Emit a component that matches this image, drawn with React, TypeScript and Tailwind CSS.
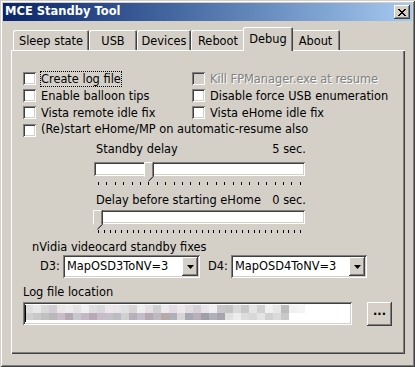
import React from 'react';

// classic win2k bevels
const raised =
  'shadow-[inset_-1px_-1px_0_#404040,inset_1px_1px_0_#ffffff,inset_-2px_-2px_0_#808080,inset_2px_2px_0_#d4d0c8]';
const sunken =
  'shadow-[inset_1px_1px_0_#808080,inset_-1px_-1px_0_#ffffff,inset_2px_2px_0_#404040,inset_-2px_-2px_0_#d4d0c8]';

const tabs = [
  { name: 'Sleep state', w: 'w-[76px]' },
  { name: 'USB', w: 'w-[48px]' },
  { name: 'Devices', w: 'w-[54px]' },
  { name: 'Reboot', w: 'w-[54px]' },
  { name: 'Debug', w: 'w-[50px]', active: true },
  { name: 'About', w: 'w-[49px]' },
];

// pixelated (blurred) path in the log file box
const blurTop = [
  '#e0dfe0', '#e8e8e8', '#d8d8d8', '#d4ccd4', '#e8e6e8', '#ececec', '#e4e2e4', '#f0f0f0', '#e0dde0', '#d8d8dc',
  '#ece6ea', '#e8e4e8', '#e0e0e0', '#d8d4d8', '#eeeeee', '#e6e0e6', '#d0d0d0', '#ece8ec', '#e4dce4', '#ece8ec',
  '#e0dce0', '#d8d0d8', '#e8e4e8', '#f0eef0', '#c8c8c8', '#c4c4c4', '#d8d8d8', '#c8c8c8', '#e4e4e4', '#d0d0d0',
  '#f0f0f0', '#e6e6e6', '#bcbcbc', '#f0f0f0', '#f4f4f4',
];
const blurBottom = [
  '#d0d0d0', '#c8c8c8', '#c0c0c0', '#b8b8b8', '#c8bcc8', '#b4a8b4', '#c8c8cc', '#c4b8c4', '#b8a8b8', '#c8bcc8',
  '#c4c0c8', '#bcbcc4', '#d0d0d0', '#b8b0b8', '#c4bcc8', '#b4a8b4', '#c0b8c0', '#b8a8a8', '#b0b0b8', '#d8d4d8',
  '#a8a8b0', '#b8b0b8', '#a0a0a8', '#b0b0b8', '#a8a4ac', '#e0e0e0', '#ececec', '#dcdcdc', '#d8d8d8', '#e4e4e4',
  '#d0d0d0', '#dadada', '#c8c8c8', '#ffffff', '#ffffff',
];

function Checkbox({ disabled }: { disabled?: boolean }) {
  return <span className={`block w-[13px] h-[13px] shrink-0 ${disabled ? 'bg-[#d4d0c8]' : 'bg-white'} ${sunken}`} />;
}

function Check({ label, focus, disabled }: { label: string; focus?: boolean; disabled?: boolean }) {
  return (
    <div className="flex items-center h-[17px]">
      <Checkbox disabled={disabled} />
      <span
        className={`ml-[4px] h-[16px] leading-[14px] whitespace-nowrap border ${
          focus ? 'border-dotted border-black' : 'border-transparent'
        } ${disabled ? 'text-[#808080] [text-shadow:1px_1px_0_#ffffff]' : 'text-black'}`}
      >
        {label}
      </span>
    </div>
  );
}

function Thumb() {
  return (
    <svg width="10" height="20" viewBox="0 0 10 20" className="block">
      <polygon points="0.5,0.5 8.5,0.5 8.5,14.5 4.5,18.5 0.5,14.5" fill="#d4d0c8" />
      <polyline points="0.5,14.5 0.5,0.5 8.5,0.5" fill="none" stroke="#ffffff" />
      <polyline points="9.5,0 9.5,14.5 4.5,19.5" fill="none" stroke="#404040" />
      <polyline points="8.5,1 8.5,14.5 4.5,18.5" fill="none" stroke="#808080" />
    </svg>
  );
}

function Slider({ label, value, ticks, pos, labelH }: { label: string; value: string; ticks: number; pos: number; labelH: string }) {
  const step = 203 / (ticks - 1);
  return (
    <div className="w-[212px]">
      <div className={`flex justify-between items-center ${labelH} pl-[2px]`}>
        <span>{label}</span>
        <span>{value}</span>
      </div>
      <div className="relative h-[18px]">
        <div className={`mt-[2px] h-[14px] w-[211px] bg-white ${sunken}`} />
        <div className="absolute top-0" style={{ left: 4 + pos * step - 5 }}>
          <Thumb />
        </div>
      </div>
      <div className="h-[6px] w-[211px] px-[4px] pt-[2px] flex justify-between">
        {Array.from({ length: ticks }).map((_, i) => (
          <span key={i} className="block w-px h-[3px] bg-black" />
        ))}
      </div>
    </div>
  );
}

function Combo({ value, w }: { value: string; w: string }) {
  return (
    <div className={`${w} h-[23px] bg-white flex items-center ${sunken} p-[2px]`}>
      <span className="flex-1 pl-[2px] leading-[19px]">{value}</span>
      <span className={`w-[16px] h-[19px] bg-[#d4d0c8] flex items-center justify-center ${raised}`}>
        <svg width="7" height="4" viewBox="0 0 7 4">
          <polygon points="0,0 7,0 3.5,4" fill="#000" />
        </svg>
      </span>
    </div>
  );
}

export default function App() {
  return (
    <div
      className={`w-[415px] h-[367px] bg-[#d4d0c8] p-[3px] flex flex-col font-['DejaVu_Sans',sans-serif] text-[11.4px] text-black shadow-[inset_1px_1px_0_#d4d0c8,inset_-1px_-1px_0_#404040,inset_2px_2px_0_#ffffff,inset_-2px_-2px_0_#808080]`}
    >
      {/* Title bar */}
      <div className="h-[18px] bg-linear-to-r from-[#0a246a] to-[#a6caf0] flex items-center justify-between pl-[2px] pr-[2px]">
        <span className="text-white font-bold text-[11.5px] leading-none">MCE Standby Tool</span>
        <button className={`w-[16px] h-[14px] bg-[#d4d0c8] flex items-center justify-center ${raised}`}>
          <svg width="8" height="7" viewBox="0 0 8 7" shapeRendering="crispEdges">
            <path d="M0 0h2v1h1v1h2v-1h1v-1h2v1h-1v1h-1v1h-1v1h1v1h1v1h1v1h-2v-1h-1v-1h-2v1h-1v1h-2v-1h1v-1h1v-1h1v-1h-1v-1h-1v-1h-1z" fill="#000" />
          </svg>
        </button>
      </div>

      <div className="flex-1 pl-[8px] pr-[7px] pt-[6px] pb-[10px] flex flex-col">
        {/* Tabs */}
        <div className="flex items-end h-[23px] pl-[2px]">
          {tabs.map((t) =>
            t.active ? (
              <div
                key={t.name}
                className={`${t.w} relative z-10 -mx-[2px] -mb-px h-[24px] bg-[#d4d0c8] rounded-t-[2px] flex justify-center pt-[4px] shadow-[inset_1px_1px_0_#ffffff,inset_-1px_0_0_#404040,inset_-2px_0_0_#808080]`}
              >
                {t.name}
              </div>
            ) : (
              <div
                key={t.name}
                className={`${t.w} h-[20px] rounded-t-[2px] flex justify-center pt-[3px] shadow-[inset_1px_1px_0_#ffffff,inset_-1px_0_0_#404040,inset_-2px_0_0_#808080]`}
              >
                {t.name}
              </div>
            )
          )}
        </div>

        {/* Panel */}
        <div className="flex-1 flex flex-col pl-[12px] pt-[20px] shadow-[inset_1px_1px_0_#ffffff,inset_-1px_-1px_0_#404040,inset_-2px_-2px_0_#808080]">
          <div className="grid grid-cols-[169px_1fr]">
            <Check label="Create log file" focus />
            <Check label="Kill FPManager.exe at resume" disabled />
            <Check label="Enable balloon tips" />
            <Check label="Disable force USB enumeration" />
            <Check label="Vista remote idle fix" />
            <Check label="Vista eHome idle fix" />
          </div>
          <div className="h-[18px] flex items-center">
            <Checkbox />
            <span className="ml-[5px] whitespace-nowrap">(Re)start eHome/MP on automatic-resume also</span>
          </div>

          <div className="ml-[71px] mt-[1px]">
            <Slider label="Standby delay" value="5 sec." ticks={25} pos={6} labelH="h-[20px]" />
            <div className="h-[7px]" />
            <Slider label="Delay before starting eHome" value="0 sec." ticks={36} pos={0} labelH="h-[15px]" />
          </div>

          <div className="ml-[9px] mt-[5px] h-[16px] leading-[16px]">nVidia videocard standby fixes</div>
          <div className="flex items-center h-[23px] ml-[17px]">
            <span className="w-[23px]">D3:</span>
            <Combo value="MapOSD3ToNV=3" w="w-[137px]" />
            <span className="ml-[8px] w-[23px]">D4:</span>
            <Combo value="MapOSD4ToNV=3" w="w-[136px]" />
          </div>

          <div className="mt-[6px] h-[16px] leading-[16px]">Log file location</div>
          <div className="mt-[2px] flex items-start">
            <div className={`w-[329px] h-[23px] bg-white ${sunken} relative py-[3px] pl-[2px]`}>
              <div className="flex">
                {blurTop.map((c, i) => (
                  <span key={i} className="block w-[8px] h-[8px]" style={{ background: c }} />
                ))}
              </div>
              <div className="flex">
                {blurBottom.map((c, i) => (
                  <span key={i} className="block w-[8px] h-[7px]" style={{ background: c }} />
                ))}
              </div>
              <span className="absolute left-[2px] top-[3px] w-px h-[17px] bg-black" />
            </div>
            <button className={`ml-[15px] w-[25px] h-[24px] bg-[#d4d0c8] flex items-center justify-center ${raised}`}>
              <span className="leading-none -mt-[4px] font-bold">...</span>
            </button>
          </div>
        </div>
      </div>
    </div>
  );
}
